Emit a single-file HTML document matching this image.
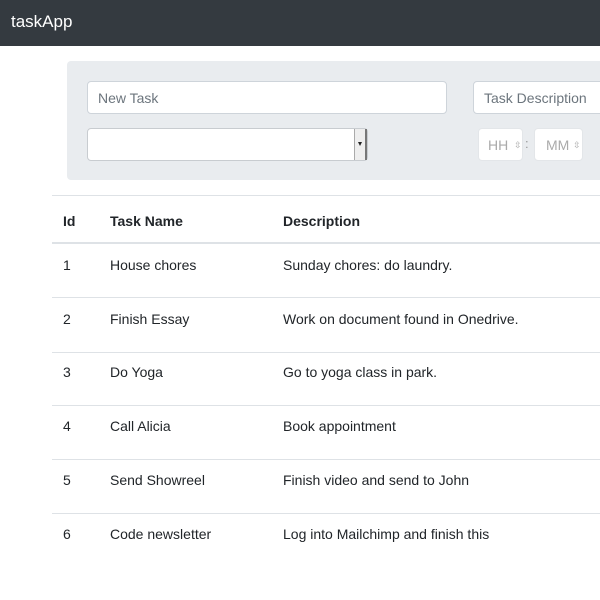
<!DOCTYPE html>
<html><head><style>
body{margin:0;width:600px;height:600px;overflow:hidden;background:#fff;font-family:"Liberation Sans",sans-serif;font-size:14px;color:#212529;position:relative}
.nav{position:absolute;left:0;top:0;width:600px;height:46px;background:#343a40;color:#fff;font-size:17px}
.nav span{position:absolute;left:11px;top:12px}
.jum{position:absolute;left:67px;top:61px;width:560px;height:119px;background:#e9ecef;border-radius:4px}
.in{position:absolute;background:#fff;border:1px solid #ced4da;border-radius:4px;box-sizing:border-box;color:#6c757d;font-size:14px}
.in span{position:absolute;left:10px;top:8px}
.tbl{position:absolute;left:52px;top:195px;width:560px;border-top:1px solid #dee2e6}
.row{position:absolute;left:0;width:560px;border-top:1px solid #dee2e6}
.c{position:absolute}
</style></head><body>
<div class="nav"><span>taskApp</span></div>
<div class="jum"></div>
<div class="in" style="left:87px;top:81px;width:360px;height:33px"><span>New Task</span></div>
<div class="in" style="left:473px;top:81px;width:140px;height:33px"><span>Task Description</span></div>
<div class="in" style="left:87px;top:128px;width:281px;height:33px;border-color:#c8ccd0">
<div style="position:absolute;right:0;top:0;width:10px;height:31px;background:#eee;border-left:1px solid #aaa;border-right:2px solid #777"></div>
<div style="position:absolute;right:5px;top:13px;width:0;height:0;border-left:2.5px solid transparent;border-right:2.5px solid transparent;border-top:4px solid #222"></div></div>
<div class="in" style="left:478px;top:128px;width:45px;height:33px;color:#aaa;border-color:#e3e6e9"><span style="left:9px">HH</span><span style="left:35px;font-size:9px;top:11px">⇳</span></div>
<div style="position:absolute;left:525px;top:136px;color:#999;font-size:13px">:</div>
<div class="in" style="left:534px;top:128px;width:49px;height:33px;color:#aaa;border-color:#e3e6e9"><span style="left:11px">MM</span><span style="left:38px;font-size:9px;top:11px">⇳</span></div>
<div class="tbl"></div>
<div style="position:absolute;left:52px;top:213px;font-weight:bold">
<span class="c" style="left:11px">Id</span><span class="c" style="left:58px;white-space:nowrap">Task Name</span><span class="c" style="left:231px">Description</span></div>
<div class="row" style="left:52px;top:242px;border-top:2px solid #dee2e6"></div>
<div class="row" style="left:52px;top:297px"></div>
<div class="row" style="left:52px;top:352px"></div>
<div class="row" style="left:52px;top:405px"></div>
<div class="row" style="left:52px;top:459px"></div>
<div class="row" style="left:52px;top:513px"></div>
<div style="position:absolute;left:52px;top:257px;white-space:nowrap">
<span class="c" style="left:11px;top:0">1</span><span class="c" style="left:58px;top:0">House chores</span><span class="c" style="left:231px;top:0">Sunday chores: do laundry.</span>
<span class="c" style="left:11px;top:54px">2</span><span class="c" style="left:58px;top:54px">Finish Essay</span><span class="c" style="left:231px;top:54px">Work on document found in Onedrive.</span>
<span class="c" style="left:11px;top:107px">3</span><span class="c" style="left:58px;top:107px">Do Yoga</span><span class="c" style="left:231px;top:107px">Go to yoga class in park.</span>
<span class="c" style="left:11px;top:161px">4</span><span class="c" style="left:58px;top:161px">Call Alicia</span><span class="c" style="left:231px;top:161px">Book appointment</span>
<span class="c" style="left:11px;top:215px">5</span><span class="c" style="left:58px;top:215px">Send Showreel</span><span class="c" style="left:231px;top:215px">Finish video and send to John</span>
<span class="c" style="left:11px;top:269px">6</span><span class="c" style="left:58px;top:269px">Code newsletter</span><span class="c" style="left:231px;top:269px">Log into Mailchimp and finish this</span>
</div>
</body></html>
